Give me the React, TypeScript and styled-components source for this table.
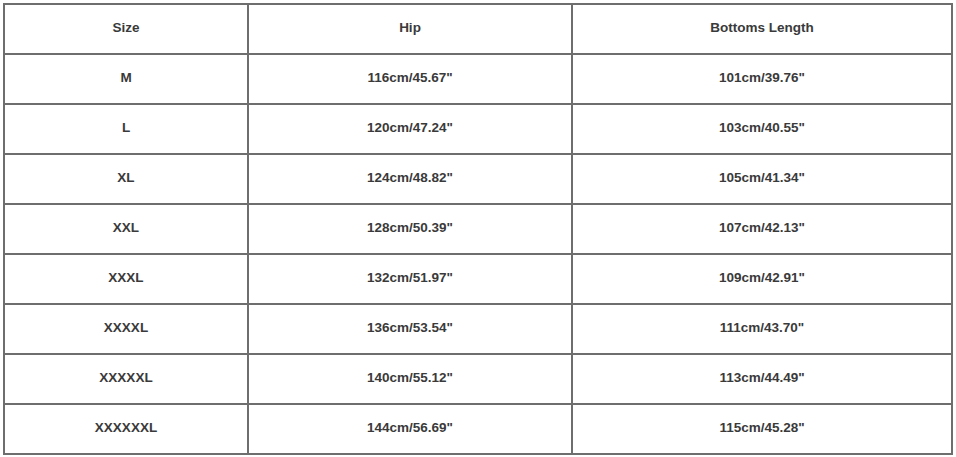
import styled, { createGlobalStyle } from 'styled-components';

const GlobalStyle = createGlobalStyle`
	html, body {
		margin: 0;
		padding: 0;
		background: #ffffff;
	}
	body {
		font-family: 'Liberation Sans', Arial, sans-serif;
	}
`;

const rows = [
	{ size: 'M', hip: '116cm/45.67"', length: '101cm/39.76"' },
	{ size: 'L', hip: '120cm/47.24"', length: '103cm/40.55"' },
	{ size: 'XL', hip: '124cm/48.82"', length: '105cm/41.34"' },
	{ size: 'XXL', hip: '128cm/50.39"', length: '107cm/42.13"' },
	{ size: 'XXXL', hip: '132cm/51.97"', length: '109cm/42.91"' },
	{ size: 'XXXXL', hip: '136cm/53.54"', length: '111cm/43.70"' },
	{ size: 'XXXXXL', hip: '140cm/55.12"', length: '113cm/44.49"' },
	{ size: 'XXXXXXL', hip: '144cm/56.69"', length: '115cm/45.28"' },
];

const App = () => {
	return (
		<>
			<GlobalStyle />
			<StyledPage>
				<StyledTable>
					<colgroup>
						<col style={{ width: 244 }} />
						<col style={{ width: 324 }} />
						<col style={{ width: 380 }} />
					</colgroup>
					<thead>
						<tr>
							<StyledHeadCell>Size</StyledHeadCell>
							<StyledHeadCell>Hip</StyledHeadCell>
							<StyledHeadCell>Bottoms Length</StyledHeadCell>
						</tr>
					</thead>
					<tbody>
						{rows.map((row) => (
							<tr key={row.size}>
								<StyledCell>{row.size}</StyledCell>
								<StyledCell>{row.hip}</StyledCell>
								<StyledCell>{row.length}</StyledCell>
							</tr>
						))}
					</tbody>
				</StyledTable>
			</StyledPage>
		</>
	);
};

export default App;

const StyledPage = styled.div`
	padding: 3px 0 0 3px;
`;
const StyledTable = styled.table`
	border-collapse: collapse;
	table-layout: fixed;
	width: 949px;
	border: 2px solid #6e6e6e;
`;
const StyledHeadCell = styled.th`
	height: 45px;
	padding: 0 0 3px;
	border: 2px solid #6e6e6e;
	text-align: center;
	vertical-align: middle;
	font-size: 13.5px;
	font-weight: 700;
	color: #3a3a3a;
`;
const StyledCell = styled.td`
	height: 45px;
	padding: 0 0 3px;
	border: 2px solid #6e6e6e;
	text-align: center;
	vertical-align: middle;
	font-size: 13.5px;
	font-weight: 700;
	color: #3a3a3a;
`;
